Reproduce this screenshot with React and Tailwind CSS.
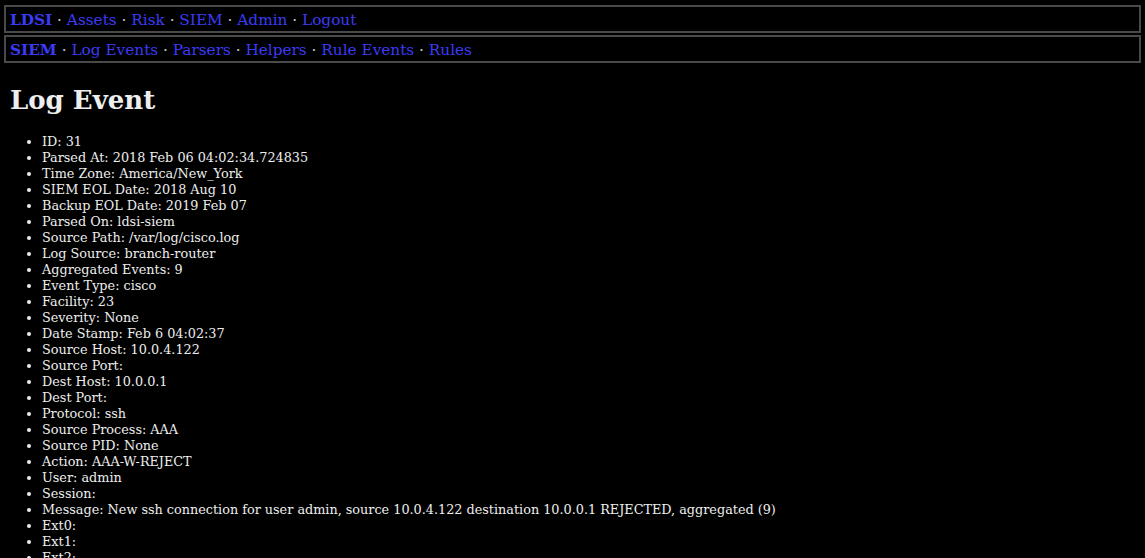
const fields = [
  ['ID', '31'],
  ['Parsed At', '2018 Feb 06 04:02:34.724835'],
  ['Time Zone', 'America/New_York'],
  ['SIEM EOL Date', '2018 Aug 10'],
  ['Backup EOL Date', '2019 Feb 07'],
  ['Parsed On', 'ldsi-siem'],
  ['Source Path', '/var/log/cisco.log'],
  ['Log Source', 'branch-router'],
  ['Aggregated Events', '9'],
  ['Event Type', 'cisco'],
  ['Facility', '23'],
  ['Severity', 'None'],
  ['Date Stamp', 'Feb 6 04:02:37'],
  ['Source Host', '10.0.4.122'],
  ['Source Port', ''],
  ['Dest Host', '10.0.0.1'],
  ['Dest Port', ''],
  ['Protocol', 'ssh'],
  ['Source Process', 'AAA'],
  ['Source PID', 'None'],
  ['Action', 'AAA-W-REJECT'],
  ['User', 'admin'],
  ['Session', ''],
  ['Message', 'New ssh connection for user admin, source 10.0.4.122 destination 10.0.0.1 REJECTED, aggregated (9)'],
  ['Ext0', ''],
  ['Ext1', ''],
  ['Ext2', ''],
  ['Ext3', ''],
];

function NavBar({ title, links }) {
  return (
    <div className="border-2 border-[#4a4a4a] px-[4px] pt-[1px] h-[28px] flex items-center text-[15.3px] leading-[18px] whitespace-pre">
      <a href="#" className="font-bold text-[#3b3bf5]">{title}</a>
      {links.map((l) => (
        <span key={l}>
          <span className="text-[#cccccc]"> · </span>
          <a href="#" className="text-[#3b3bf5]">{l}</a>
        </span>
      ))}
    </div>
  );
}

export default function App() {
  return (
    <div className="min-h-screen bg-black text-[#eeeeee] font-['DejaVu_Serif',serif] overflow-hidden h-[558px]">
      <div className="px-[4px] pt-[5px] flex flex-col gap-[2px]">
        <NavBar title="LDSI" links={['Assets', 'Risk', 'SIEM', 'Admin', 'Logout']} />
        <NavBar title="SIEM" links={['Log Events', 'Parsers', 'Helpers', 'Rule Events', 'Rules']} />
      </div>
      <div className="px-[10px]">
        <h1 className="text-[26px] font-bold mt-[22px] mb-[19px] leading-[30px]">Log Event</h1>
        <ul className="list-disc pl-[32px] text-[12.8px] leading-[16px]">
          {fields.map(([k, v]) => (
            <li key={k}>{k}: {v}</li>
          ))}
        </ul>
      </div>
    </div>
  );
}
